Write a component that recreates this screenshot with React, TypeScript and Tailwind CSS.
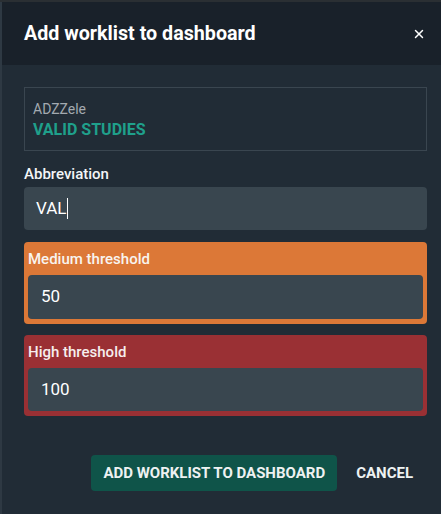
import { X } from "lucide-react";

const font = { fontFamily: "Roboto, 'Liberation Sans', sans-serif" };

export default function App() {
  return (
    <div className="h-[514px] w-[441px] overflow-hidden bg-[#2a2f33]" style={font}>
      <div className="mt-[2px] h-[512px] border-l-2 border-[#2e3943] bg-[#212c36]">
        <div className="flex h-[63px] items-center justify-between bg-[#19212a] pl-[22px] pr-[15px]">
          <h2 className="text-[19.7px] font-bold text-white">Add worklist to dashboard</h2>
          <X className="h-[14px] w-[14px] text-white" strokeWidth={2.5} />
        </div>

        <div className="pl-[22px] pr-[14px] pt-[22px]">
          <div className="h-[64px] border border-[#3a4650] px-[8px] pt-[11px]">
            <p className="text-[14px] leading-[20px] text-[#a3aab0]">ADZZele</p>
            <p className="text-[16px] font-bold leading-[22px] text-[#1fa08b]">VALID STUDIES</p>
          </div>

          <p className="mt-[13px] text-[15px] font-medium leading-[20px] text-[#f4f6f7]">Abbreviation</p>
          <div className="mt-[3px] flex h-[43px] items-center rounded-[4px] bg-[#39464f] px-[12px] text-[17px] text-white">
            VAL<span className="ml-[1px] h-[21px] w-px bg-white" />
          </div>

          <div className="mt-[12px] rounded-[4px] bg-[#dc7837] px-[4px] pb-[5px] pt-[7px]">
            <p className="text-[15px] font-medium leading-[20px] text-[#f8f4f0]">Medium threshold</p>
            <div className="mt-[6px] flex h-[44px] items-center rounded-[4px] bg-[#39464f] px-[13px] text-[17px] text-white">
              50
            </div>
          </div>

          <div className="mt-[11px] rounded-[4px] bg-[#9a3034] px-[4px] pb-[5px] pt-[7px]">
            <p className="text-[15px] font-medium leading-[20px] text-[#f6eeee]">High threshold</p>
            <div className="mt-[6px] flex h-[43px] items-center rounded-[4px] bg-[#39464f] px-[13px] text-[17px] text-white">
              100
            </div>
          </div>

          <div className="mt-[39px] flex items-center justify-end gap-[19px] pr-[14px]">
            <button className="h-[36px] rounded-[4px] bg-[#0f5449] px-[12px] text-[15px] font-bold text-[#eef2f2]">
              ADD WORKLIST TO DASHBOARD
            </button>
            <button className="text-[15px] font-bold text-[#eef2f2]">CANCEL</button>
          </div>
        </div>
      </div>
    </div>
  );
}
